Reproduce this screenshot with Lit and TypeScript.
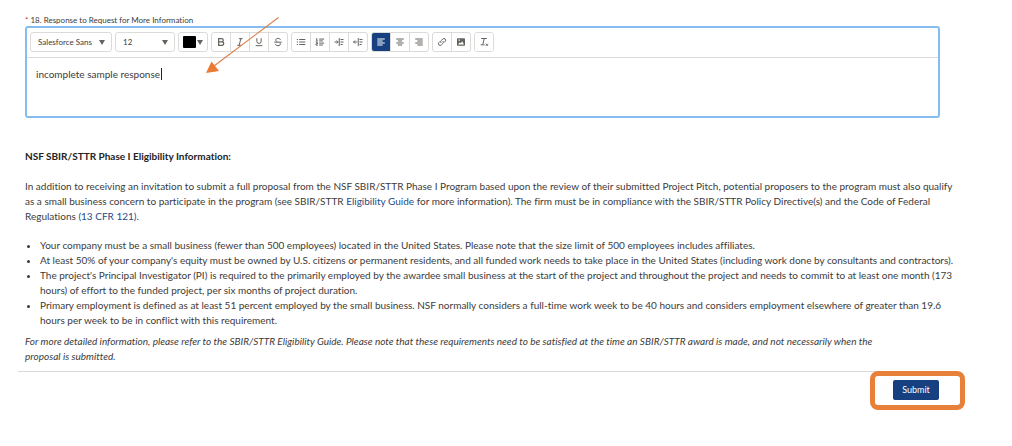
import { LitElement, html, css, svg } from "lit";
import { customElement, property } from "lit/decorators.js";
import { classMap } from "lit/directives/class-map.js";

const icons: Record<string, unknown> = {
  bold: svg`<path d="M3.2 2h3.6a1.9 1.9 0 0 1 0 3.8H3.2zM3.2 5.8h4a2.1 2.1 0 0 1 0 4.2h-4z" stroke-width="1.5"/>`,
  italic: svg`<path d="M4.6 2h4.6M2.8 10h4.6M7 2L5 10"/>`,
  underline: svg`<path d="M3.4 1.5v3.6a2.6 2.6 0 0 0 5.2 0V1.5M2 10.4h8"/>`,
  strike: svg`<path d="M9 3.4C8.6 2.2 7.4 1.7 6 1.7c-1.6 0-2.8.7-2.8 2 0 1 .8 1.6 2 2M1.5 6.2h9M8.6 7.4c.8 1.8-.5 3-2.6 3-1.7 0-2.8-.7-3.1-2"/>`,
  bullets: svg`<path d="M1 3h1.4M1 6h1.4M1 9h1.4M3.8 3h7.4M3.8 6h7.4M3.8 9h7.4"/>`,
  numbers: svg`<path d="M1.2 2h1v2.8M1 4.9h2.3M1 6.8h2v1.4H1.2v1.6h2.1M5 2.5h6M5 4.7h4.5M5 7.3h6M5 9.6h4.5"/>`,
  indent: svg`<path d="M.6 6h4.4M3.2 4.2L5 6 3.2 7.8M6.3 1.2v9.6M7.8 3h3.6M7.8 6h3.6M7.8 9h2.6"/>`,
  outdent: svg`<path d="M.6 6h4.4M2.4 4.2L.6 6l1.8 1.8M6.3 1.2v9.6M7.8 3h3.6M7.8 6h3.6M7.8 9h2.6"/>`,
  left: svg`<path d="M1.5 2.4h9M1.5 4.8h6.5M1.5 7.2h9M1.5 9.6h6.5"/>`,
  center: svg`<path d="M1.5 2.4h9M3.4 4.8h5.2M1.5 7.2h9M3.4 9.6h5.2"/>`,
  right: svg`<path d="M1.5 2.4h9M4 4.8h6.5M1.5 7.2h9M4 9.6h6.5"/>`,
  link: svg`<path d="M5 7.2C4 6 4.4 5 5.2 4.2l1.7-1.8a2 2 0 0 1 2.9 2.8L8.4 6.6M7 4.8c1 1.2.7 2.2-.1 3L5.2 9.5a2 2 0 0 1-2.9-2.8l1.4-1.5"/>`,
  image: svg`<path fill="currentColor" stroke="none" fill-rule="evenodd" d="M2 1.6h8q.8 0 .8.8v7.2q0 .8-.8.8H2q-.8 0-.8-.8V2.4q0-.8.8-.8zM2.5 8.9h7L7.4 5.2 5.8 7.4 4.6 6.3zM3.2 3v1.5h1.5V3z"/>`,
  clear: svg`<path d="M2.5 1.8h7M6.3 1.8L4.6 9M2 9.4h4.6M8.2 8l2.6 2.6M10.8 8L8.2 10.6"/>`,
};

@customElement("tool-button")
class ToolButton extends LitElement {
  @property() icon = "";
  @property() label = "";
  @property({ type: Boolean }) active = false;

  static styles = css`
    :host { display: block; }
    button {
      display: grid;
      place-items: center;
      width: 18px;
      height: 18px;
      padding: 0;
      border: 0;
      background: #fff;
      color: #66635f;
      cursor: pointer;
    }
    button.active { background: #16407f; color: #fff; }
    svg { width: 10px; height: 10px; fill: none; stroke: currentColor; stroke-width: 1.2; }
  `;

  render() {
    return html`<button type="button" aria-label=${this.label} aria-pressed=${this.active}
      class=${classMap({ active: this.active })}>
      <svg viewBox="0 0 12 12" aria-hidden="true">${icons[this.icon]}</svg>
    </button>`;
  }
}

const groups: [string, string][][] = [
  [["bold", "Bold"], ["italic", "Italic"], ["underline", "Underline"], ["strike", "Strikethrough"]],
  [["bullets", "Bulleted list"], ["numbers", "Numbered list"], ["indent", "Indent"], ["outdent", "Outdent"]],
  [["left", "Align left"], ["center", "Align center"], ["right", "Align right"]],
  [["link", "Link"], ["image", "Image"]],
  [["clear", "Remove formatting"]],
];

@customElement("app-root")
class AppRoot extends LitElement {
  static styles = css`
    :host {
      display: block;
      position: relative;
      padding: 14px 72px 36px 25px;
      font-family: Lato, "Liberation Sans", sans-serif;
      font-size: 10px;
      line-height: 15px;
      font-variant-ligatures: none;
      color: #3c3b3a;
      background: #fff;
    }
    * { box-sizing: border-box; }
    select, textarea, button { font-variant-ligatures: inherit; }
    .label { display: block; font-size: 8px; line-height: 12px; }
    .req { color: #c23934; }
    .editor {
      border: 2px solid #86bdf0;
      border-radius: 3px;
    }
    .toolbar {
      display: flex;
      flex-wrap: wrap;
      gap: 3px;
      padding: 4px 3px 5px;
      border-bottom: 1px solid #dddbda;
    }
    .pick, .color, .group {
      border: 1px solid #dddbda;
      border-radius: 3px;
      height: 20px;
      background: #fff;
      overflow: hidden;
    }
    .pick { display: grid; align-items: center; }
    .pick > * { grid-area: 1 / 1; }
    .font { width: 82px; }
    .size { width: 60px; }
    .arrow { width: 6px; height: 5px; fill: #66635f; pointer-events: none; }
    .pick .arrow { justify-self: end; margin-right: 6px; }
    select {
      appearance: none;
      width: 100%;
      height: 18px;
      padding: 0 7px;
      border: 0;
      background: none;
      color: #3c3b3a;
      font-family: inherit;
      font-size: 8px;
      line-height: 18px;
    }
    .color {
      display: flex;
      align-items: center;
      gap: 1px;
      width: 30px;
      padding: 0 4px;
    }
    .swatch { width: 13px; height: 12px; border-radius: 1px; background: #000; }
    .group { display: flex; gap: 1px; background: #dddbda; }
    .entry { position: relative; display: block; }
    textarea {
      display: block;
      width: 100%;
      height: 58px;
      padding: 9px;
      border: 0;
      outline: 0;
      resize: none;
      background: none;
      color: inherit;
      font-family: inherit;
      font-size: 10px;
      line-height: 15px;
    }
    .caret {
      position: absolute;
      left: 134px;
      top: 10px;
      width: 1px;
      height: 12px;
      background: #222;
    }
    .info { margin-right: -18px; }
    h2 { margin: 31px 0 15px; font-size: 10px; line-height: 15px; font-weight: 700; color: #222; }
    p { margin: 0; }
    .note { padding-right: 48px; }
    a { color: #1f4a85; text-decoration: none; }
    ul { margin: 14px 0 6px; padding: 0 0 0 15px; }
    .footer {
      display: flex;
      justify-content: flex-end;
      margin: 7px 0 0 -7px;
      padding: 8px 1px 0 0;
      border-top: 1px solid #dddbda;
    }
    .submit { position: relative; }
    .submit button {
      display: block;
      width: 46px;
      height: 20px;
      padding: 0;
      border: 0;
      border-radius: 2px;
      background: #16407f;
      color: #fff;
      font-family: inherit;
      font-size: 9px;
      line-height: 20px;
    }
    .ring {
      position: absolute;
      inset: -9px -26px -10px -23px;
      border: 5px solid #e8803a;
      border-radius: 8px;
      pointer-events: none;
    }
    .pointer {
      position: absolute;
      left: 204px;
      top: 16px;
      width: 76px;
      height: 60px;
      pointer-events: none;
    }
  `;

  private arrow() {
    return html`<svg class="arrow" viewBox="0 0 6 5" aria-hidden="true"><path d="M0 0h6L3 5z" /></svg>`;
  }

  render() {
    return html`
      <label class="label" for="response"><span class="req">*</span> 18. Response to Request for More Information</label>
      <div class="editor">
        <div class="toolbar" role="toolbar" aria-label="Formatting">
          <div class="pick font">
            <select aria-label="Font"><option>Salesforce Sans</option></select>${this.arrow()}
          </div>
          <div class="pick size">
            <select aria-label="Font size"><option>12</option></select>${this.arrow()}
          </div>
          <button class="color" type="button" aria-label="Text color">
            <span class="swatch"></span>${this.arrow()}
          </button>
          ${groups.map((g) => html`<div class="group">
            ${g.map(([icon, label]) => html`<tool-button .icon=${icon} .label=${label} .active=${icon === "left"}></tool-button>`)}
          </div>`)}
        </div>
        <div class="entry">
          <textarea id="response" spellcheck="false" .value=${"incomplete sample response"}></textarea>
          <span class="caret"></span>
        </div>
      </div>

      <div class="info">
        <h2>NSF SBIR/STTR Phase I Eligibility Information:</h2>
        <p>In addition to receiving an invitation to submit a full proposal from the NSF SBIR/STTR Phase I Program based upon the review of their submitted Project Pitch, potential proposers to the program must also qualify as a small business concern to participate in the program (see SBIR/STTR <a href="#guide">Eligibility Guide</a> for more information). The firm must be in compliance with the SBIR/STTR Policy Directive(s) and the Code of Federal Regulations <a href="#cfr">(13 CFR 121)</a>.</p>
        <ul>
          <li>Your company must be a small business (fewer than 500 employees) located in the United States. Please note that the size limit of 500 employees includes affiliates.</li>
          <li>At least 50% of your company's equity must be owned by U.S. citizens or permanent residents, and all funded work needs to take place in the United States (including work done by consultants and contractors).</li>
          <li>The project's Principal Investigator (PI) is required to the primarily employed by the awardee small business at the start of the project and throughout the project and needs to commit to at least one month (173 hours) of effort to the funded project, per six months of project duration.</li>
          <li>Primary employment is defined as at least 51 percent employed by the small business. NSF normally considers a full-time work week to be 40 hours and considers employment elsewhere of greater than 19.6 hours per week to be in conflict with this requirement.</li>
        </ul>
        <p class="note"><em>For more detailed information, please refer to the SBIR/STTR Eligibility Guide. Please note that these requirements need to be satisfied at the time an SBIR/STTR award is made, and not necessarily when the proposal is submitted.</em></p>
      </div>
      <div class="footer">
        <div class="submit"><button type="submit">Submit</button><span class="ring"></span></div>
      </div>
      <svg class="pointer" viewBox="0 0 76 60" aria-hidden="true">
        <path d="M74.5 1.5L10 50" stroke="#dc7d45" stroke-width="1.1" fill="none" />
        <path d="M2 57L7.5 45.5L15 55z" fill="#ec7a32" />
      </svg>
    `;
  }
}
